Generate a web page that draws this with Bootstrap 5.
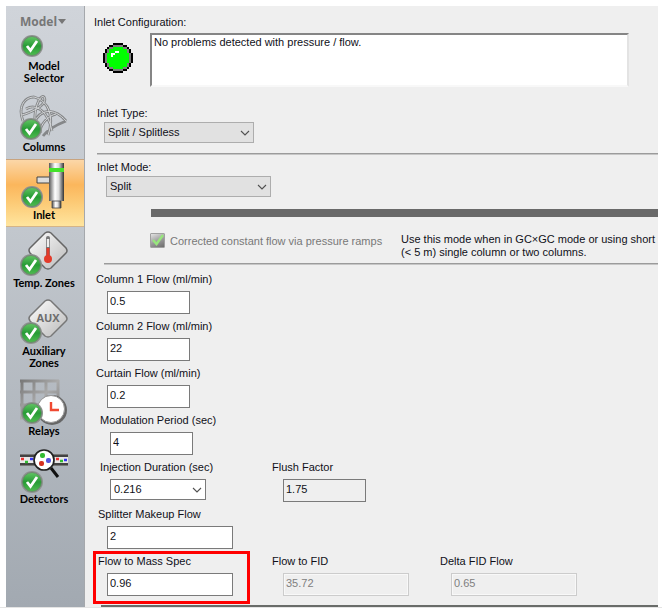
<!DOCTYPE html>
<html lang="en">
<head>
<meta charset="utf-8">
<meta name="viewport" content="width=device-width, initial-scale=1">
<title>Inlet Configuration</title>
<link href="https://cdn.jsdelivr.net/npm/bootstrap@5.3.0/dist/css/bootstrap.min.css" rel="stylesheet">
<style>
body{font:11px/13px "Liberation Sans",Arial,sans-serif;color:#101018;background:#fff}
.shell{min-height:100vh;padding:6px 4px 0 6px;border-bottom:1px solid #e4e4e4}
.side{flex:0 0 79px;background:linear-gradient(#d0d4da,#c3c8ce 35%,#a2a9b1);border-right:1px solid #a5a8ac;font:700 11px/12px Lato,"Noto Sans",sans-serif}
.side-item{color:#000;text-decoration:none;text-align:center;padding:2px 2px 6px 0;display:block}
.side-item svg{display:block;width:78px;height:48px;margin-right:-2px}
.side-item.current{background:linear-gradient(#fbd8ab,#fbb65c 38%,#fcc771 60%,#ffe6a0);box-shadow:inset 0 1px #c9a47e,inset 0 -1px #d5b487}
.side-head{height:85px;padding-top:9px}
.side-item.selector{padding:5px 2px 0 0}
.side-item.selector svg{height:24px;margin-bottom:2px}
.model-btn{display:block;border:0;background:none;padding:0 0 0 14px;color:#777;font:700 12px/14px "Open Sans","Noto Sans",sans-serif}
.model-btn::after{content:"";display:inline-block;border:4px solid transparent;border-top:5px solid #777;border-bottom:0;vertical-align:2px;margin-left:1px}
.panel{background:#efefef;padding-top:8px}
.panel label{display:block;line-height:16px}
.panel .status-label{padding-left:9px}
.status-row{padding:3px 29px 0 18px;gap:17px}
.led{width:30px;height:30px;margin-top:10px}
.status-box{height:54px;border:2px solid;border-color:#858585 #e3e3e3 #f8f8f8 #858585;padding:1px 2px;resize:none;background:#fff;color:#101018;font:inherit;overflow:hidden}
.form-select,.form-control{font-size:11px;line-height:16px;color:#101018;border-radius:0;border:1px solid #7a7a7a;background-color:#fff}
.form-control{height:23px;padding:0 2px 3px}
.form-select{height:21px;padding:0 20px 2px 3px;background-image:url("data:image/svg+xml,%3Csvg xmlns='http://www.w3.org/2000/svg' viewBox='0 0 10 10'%3E%3Cpath d='M1 3l4 4 4-4' fill='none' stroke='%23505050' stroke-width='1.1'/%3E%3C/svg%3E");background-size:10px 10px;background-position:right 3px center}
.form-select.flat{background-color:#e1e1e1;border-color:#adadad}
.form-control[readonly]{background:#efefef}
.form-control:disabled{background:#efefef;border-color:#ccc;color:#808080;box-shadow:inset 0 0 0 1px #f8f8f8}
.type-block{padding:18px 0 0 12px}
.type-block .form-select{width:150px;margin:1px 0 0 7px}
.mode-block .form-select{width:165px;margin:1px 0 0 9px}
.mode-block{padding:4px 0 0 12px}
.line{height:2px;background:#9b9b9b;border-bottom:1px solid #c6c6c6;margin:10px 0 0 12px}
.line.inner{margin:4px 0 0 19px}
.thick-bar{height:8px;background:#696969;margin:12px 0 0 66px}
.ramp-row{padding:16px 0 0 65px;gap:5px}
.ramp-check{flex:none;appearance:none;width:15px;height:15px;margin:0;border:1px solid #a0a0a0;border-radius:1px;background:url("data:image/svg+xml,%3Csvg xmlns='http://www.w3.org/2000/svg' viewBox='0 0 13 13'%3E%3Cpath d='M2 6l3.5 4L12 1' fill='none' stroke='%2397e67c' stroke-width='2.4'/%3E%3C/svg%3E"),linear-gradient(155deg,#e2e2e2,#999 55%,#6d6d6d)}
.ramp-label{color:#787878;flex:0 0 226px}
.ramp-note{flex:1;max-width:257px}
.fields{display:grid;grid-template-columns:176px 168px 1fr;row-gap:4px;padding:6px 0 6px 11px}
.fields .form-control,.fields .form-select{margin:4px 0 0 11px}
.shift-a{padding-left:4px}
.shift-b{padding-left:2px}
.fields .shift-a .form-control,.fields .shift-a .form-select{margin-left:10px}
.fields .shift-b .form-control{margin-left:9px}
.w-short{width:83px}
.w-mid{width:96px}
.w-long{width:126px}
.first-col{grid-column:1}
.focus-frame{position:absolute;inset:-2px 22px -8px -3px;border:3px solid #f00;pointer-events:none}
.end-line{height:2px;background:#696c69;margin-left:16px}
</style>
<script src="https://cdn.jsdelivr.net/npm/bootstrap@5.3.0/dist/js/bootstrap.bundle.min.js"></script>
</head>
<body>
<svg width="0" height="0" class="position-absolute" aria-hidden="true">
<defs>
<linearGradient id="green" x1="0" y1="0" x2="0" y2="1"><stop offset="0" stop-color="#62c564"/><stop offset=".5" stop-color="#279b35"/><stop offset="1" stop-color="#4fbb50"/></linearGradient>
<linearGradient id="steel"><stop offset="0" stop-color="#555"/><stop offset=".4" stop-color="#fff"/><stop offset=".65" stop-color="#ddd"/><stop offset="1" stop-color="#333"/></linearGradient>
<linearGradient id="plate" x1="0" y1="0" x2="1" y2="1"><stop offset="0" stop-color="#fff"/><stop offset="1" stop-color="#b9b9b9"/></linearGradient>
<linearGradient id="frame" x1="0" y1="0" x2="1" y2="1"><stop offset="0" stop-color="#777"/><stop offset=".5" stop-color="#aaa"/><stop offset="1" stop-color="#777"/></linearGradient>
<g id="tick"><circle r="11" fill="#8e928f"/><circle r="9.5" fill="url(#green)" stroke="#69816b" stroke-width=".8"/><path d="M-5 0L-1.5 4.5L5-5" fill="none" stroke="#fff" stroke-width="2.8"/></g>
</defs>
</svg>
<div class="shell d-flex">
<nav class="side" aria-label="Instrument">
<div class="side-head">
<button class="model-btn" type="button">Model</button>
<a class="side-item selector" href="#"><svg viewBox="0 0 78 24"><use href="#tick" x="26" y="12"/></svg>Model<br>Selector</a>
</div>
<a class="side-item" href="#"><svg viewBox="0 0 78 48"><g fill="none" stroke="#858789" stroke-width="2.8"><path d="M17 28C11 12 20 4 28 4C44 8 48 26 42 42M16 22C30 18 42 10 38 4C34 0 26 20 30 32M20 16C30 10 42 18 46 38M28 30C34 16 48 14 60 28M34 40C34 30 44 22 50 21M60 28C50 32 42 36 37 43"/></g><g fill="none" stroke="#d2d4d6" stroke-width="1"><path d="M17 28C11 12 20 4 28 4C44 8 48 26 42 42M16 22C30 18 42 10 38 4C34 0 26 20 30 32M20 16C30 10 42 18 46 38M28 30C34 16 48 14 60 28M34 40C34 30 44 22 50 21"/></g><use href="#tick" x="25" y="36"/></svg>Columns</a>
<a class="side-item current" href="#" aria-current="page"><svg viewBox="0 0 78 48"><path d="M31 16h15v6H31z" fill="#ddd" stroke="#444"/><path d="M43 2h15v38H43z" fill="url(#steel)"/><path d="M46 40h9v7h-9z" fill="url(#steel)" stroke="#444" stroke-width=".8"/><path d="M43 7h15v4H43z" fill="#43e22a"/><use href="#tick" x="26" y="36"/></svg>Inlet</a>
<a class="side-item" href="#"><svg viewBox="0 0 78 48"><path d="M39 4q3-2 6 0l15 15q2 3 0 5L45 39q-3 2-6 0L24 24q-2-3 0-5z" fill="url(#plate)" stroke="#666" stroke-width="1.5"/><path d="M42 9v19" stroke="#777" stroke-width="4" stroke-linecap="round"/><path d="M42 10v8" stroke="#eee" stroke-width="2.4"/><path d="M42 19v10" stroke="#e33b2a" stroke-width="3"/><circle cx="42" cy="30" r="4" fill="#e33b2a"/><use href="#tick" x="25" y="36"/></svg>Temp. Zones</a>
<a class="side-item" href="#"><svg viewBox="0 0 78 48"><path d="M39 4q3-2 6 0l15 15q2 3 0 5L45 39q-3 2-6 0L24 24q-2-3 0-5z" fill="url(#plate)" stroke="#777" stroke-width="1.5"/><text x="42" y="25" text-anchor="middle" font-family="Open Sans, sans-serif" font-size="11" font-weight="700" fill="#6d6d6d">AUX</text><use href="#tick" x="25" y="36"/></svg>Auxiliary<br>Zones</a>
<a class="side-item" href="#"><svg viewBox="0 0 78 48"><path d="M14 4h39M14 15h39M14 28h39M14 41h20M16 3v39M28 3v39M40 3v25M52 3v25" fill="none" stroke="url(#frame)" stroke-width="3"/><circle cx="46" cy="33" r="15" fill="#666"/><circle cx="45" cy="32" r="13.5" fill="#fff" stroke="#999"/><path d="M45 25v8h8" fill="none" stroke="#f04a32" stroke-width="2.4"/><use href="#tick" x="26" y="36"/></svg>Relays</a>
<a class="side-item" href="#"><svg viewBox="0 0 78 48"><path d="M14 9h48v12H14z" fill="#777"/><path d="M14 12h48v6H14z" fill="#e8e8e8"/><path d="M14 11h48M14 19h48" stroke="#333" stroke-width="1.6"/><path d="M15 14h3M50 14h3" stroke="#e33" stroke-width="2.5"/><path d="M19 17h3M54 16h3" stroke="#3b3" stroke-width="2.5"/><path d="M24 14h3M58 15h3" stroke="#33e" stroke-width="2.5"/><path d="M45 23l7 9" stroke="#111" stroke-width="3"/><circle cx="38" cy="15" r="10" fill="#fff" stroke="#222" stroke-width="1.7"/><rect x="34" y="8" width="5" height="5" rx="2" fill="#3b3"/><rect x="40" y="13" width="5" height="5" rx="2" fill="#55d"/><rect x="33" y="16" width="5" height="5" rx="2" fill="#d43222"/><use href="#tick" x="26" y="37"/></svg>Detectors</a>
</nav>
<main class="panel flex-grow-1 d-flex flex-column">
<label for="status" class="status-label">Inlet Configuration:</label>
<div class="status-row d-flex">
<svg class="led flex-shrink-0" viewBox="0 0 30 30" shape-rendering="crispEdges" role="img" aria-label="Ready"><path d="M10 0h10v2h4v2h2v2h2v4h2v10h-2v4h-2v2h-2v2h-4v2H10v-2H6v-2H4v-2H2v-4H0V10h2V6h2V4h2V2h4z" fill="#000"/><path d="M10 2h10v2h4v2h2v4h2v10h-2v4h-2v2h-4v2H10v-2H6v-2H4v-4H2V10h2V6h2V4h4z" fill="#808080"/><path d="M10 4h10v2h4v4h2v10h-2v4h-4v2H10v-2H6v-4H4V10h2V6h4z" fill="#0f0"/><path d="M8 14h2v-2h2v-2h4V8h-4v2H8z" fill="#fff"/></svg>
<textarea id="status" class="status-box flex-grow-1" readonly>No problems detected with pressure / flow.</textarea>
</div>
<div class="type-block"><label for="type">Inlet Type:</label><select id="type" class="form-select flat"><option>Split / Splitless</option></select></div>
<div class="line"></div>
<div class="mode-block"><label for="mode">Inlet Mode:</label><select id="mode" class="form-select flat"><option>Split</option></select></div>
<div class="thick-bar"></div>
<div class="ramp-row d-flex">
<input type="checkbox" class="ramp-check" id="ramp" checked disabled>
<label for="ramp" class="ramp-label">Corrected constant flow via pressure ramps</label>
<div class="ramp-note">Use this mode when in GC×GC mode or using short (&lt; 5 m) single column or two columns.</div>
</div>
<div class="line inner"></div>
<div class="fields">
<div class="first-col"><label for="c1">Column 1 Flow (ml/min)</label><input id="c1" class="form-control w-short" value="0.5"></div>
<div class="first-col"><label for="c2">Column 2 Flow (ml/min)</label><input id="c2" class="form-control w-short" value="22"></div>
<div class="first-col"><label for="cf">Curtain Flow (ml/min)</label><input id="cf" class="form-control w-short" value="0.2"></div>
<div class="first-col shift-a"><label for="mp">Modulation Period (sec)</label><input id="mp" class="form-control w-short" value="4"></div>
<div class="first-col shift-a"><label for="inj">Injection Duration (sec)</label><select id="inj" class="form-select w-mid"><option>0.216</option></select></div>
<div><label for="ff">Flush Factor</label><input id="ff" class="form-control w-short" value="1.75" readonly></div>
<div class="first-col shift-b"><label for="sm">Splitter Makeup Flow</label><input id="sm" class="form-control w-long" value="2"></div>
<div class="first-col shift-b position-relative"><label for="ms">Flow to Mass Spec</label><input id="ms" class="form-control w-long" value="0.96"><span class="focus-frame"></span></div>
<div><label for="fid">Flow to FID</label><input id="fid" class="form-control w-long" value="35.72" disabled></div>
<div><label for="dfid">Delta FID Flow</label><input id="dfid" class="form-control w-long" value="0.65" disabled></div>
</div>
<div class="end-line mt-auto"></div>
</main>
</div>
</body>
</html>
